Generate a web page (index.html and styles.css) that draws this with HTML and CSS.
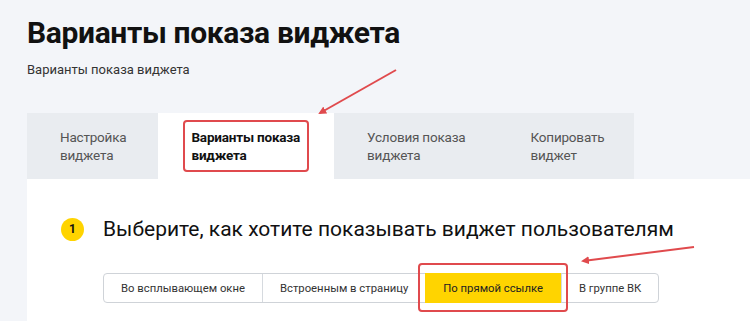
FILE: index.html
```html
<!DOCTYPE html>
<html>
	<head>
		<meta charset="utf-8">
		<title>Варианты показа виджета</title>
		<link rel="stylesheet" href="styles.css">
	</head>
	<body>
		<div class="page">
			<h1 class="title">Варианты показа виджета</h1>
			<div class="crumbs">Варианты показа виджета</div>

			<ul class="tabs">
				<li><a href="javascript:;">Настройка<br>виджета</a></li>
				<li class="current"><a href="javascript:;" class="mark">Варианты показа<br>виджета</a></li>
				<li><a href="javascript:;">Условия показа<br>виджета</a></li>
				<li class="last"><a href="javascript:;">Копировать<br>виджет</a></li>
			</ul>

			<div class="panel">
				<div class="step">
					<span class="num">1</span>
					<h2>Выберите, как хотите показывать виджет пользователям</h2>
				</div>
				<div class="switch">
					<a href="javascript:;">Во всплывающем окне</a>
					<a href="javascript:;">Встроенным в страницу</a>
					<a href="javascript:;" class="on">По прямой ссылке<i class="mark"></i></a>
					<a href="javascript:;">В группе ВК</a>
				</div>
			</div>

			<!-- стрелки-пометки поверх скриншота -->
			<svg class="notes" width="750" height="321" viewBox="0 0 750 321">
				<defs>
					<marker id="head" markerWidth="8" markerHeight="8" refX="6" refY="4" orient="auto" markerUnits="userSpaceOnUse">
						<path d="M0 0 L8 4 L0 8 Z" fill="#e04a4d"/>
					</marker>
				</defs>
				<line x1="396" y1="70" x2="320" y2="113" stroke="#e04a4d" stroke-width="2" marker-end="url(#head)"/>
				<line x1="694" y1="247" x2="583" y2="261" stroke="#e04a4d" stroke-width="2" marker-end="url(#head)"/>
			</svg>
		</div>
	</body>
</html>
```

FILE: styles.css
```css
* {
  padding: 0;
  margin: 0;
  list-style: none;
  border: 0;
  box-sizing: border-box;
}

body {
  background: #f3f5f9;
  font-family: Roboto, "Liberation Sans", sans-serif;
  color: #222;
}

a {
  color: inherit;
  text-decoration: none;
}

.page {
  position: relative;
  width: 750px;
  height: 321px;
  overflow: hidden;
  padding-left: 27px;
}

.title {
  margin-top: 15px;
  font-size: 30px;
  line-height: 36px;
  font-weight: 700;
  letter-spacing: -0.35px;
  color: #111;
}

.crumbs {
  margin-top: 10px;
  font-size: 13px;
  line-height: 18px;
  color: #333;
}

.tabs {
  display: flex;
  margin-top: 34px;
  height: 66px;
}

.tabs li {
  display: flex;
  align-items: center;
  background: #e9ecf0;
  padding: 0 32px 0 33px;
  font-size: 13.5px;
  line-height: 18px;
  letter-spacing: -0.2px;
  color: #555;
}

.tabs li.current {
  background: #fff;
  color: #111;
  font-weight: 700;
  padding: 0 25px;
}

.tabs li.last {
  padding-right: 30px;
}

.tabs .mark {
  display: block;
  padding: 6px 7px 6px 6px;
}

.mark {
  border: 2px solid #e04a4d;
  border-radius: 4px;
}

.panel {
  background: #fff;
  height: 200px;
  padding: 36px 0 0 34px;
}

.step {
  display: flex;
  align-items: center;
  height: 28px;
}

.num {
  width: 23px;
  height: 23px;
  border-radius: 50%;
  background: #ffd400;
  font-size: 12px;
  font-weight: 700;
  line-height: 23px;
  text-align: center;
  color: #111;
  margin-right: 19px;
}

.step h2 {
  font-size: 21px;
  font-weight: 400;
  color: #111;
}

.switch {
  display: inline-flex;
  margin: 30px 0 0 42px;
  height: 30px;
  border: 1px solid #cfd3d8;
  border-radius: 4px;
  font-size: 11.3px;
}

.switch a {
  display: flex;
  align-items: center;
  padding: 0 17px;
  color: #333;
  border-left: 1px solid #d6dadf;
}

.switch a:first-child {
  border-left: 0;
}

.switch a.on {
  position: relative;
  margin: -1px 0;
  padding: 0 18px;
  background: #ffd400;
  color: #222;
  border-left: 0;
}

.switch a.on .mark {
  position: absolute;
  left: -7px;
  right: -7px;
  top: -10px;
  bottom: -9px;
}

.notes {
  position: absolute;
  left: 0;
  top: 0;
  pointer-events: none;
}
```
